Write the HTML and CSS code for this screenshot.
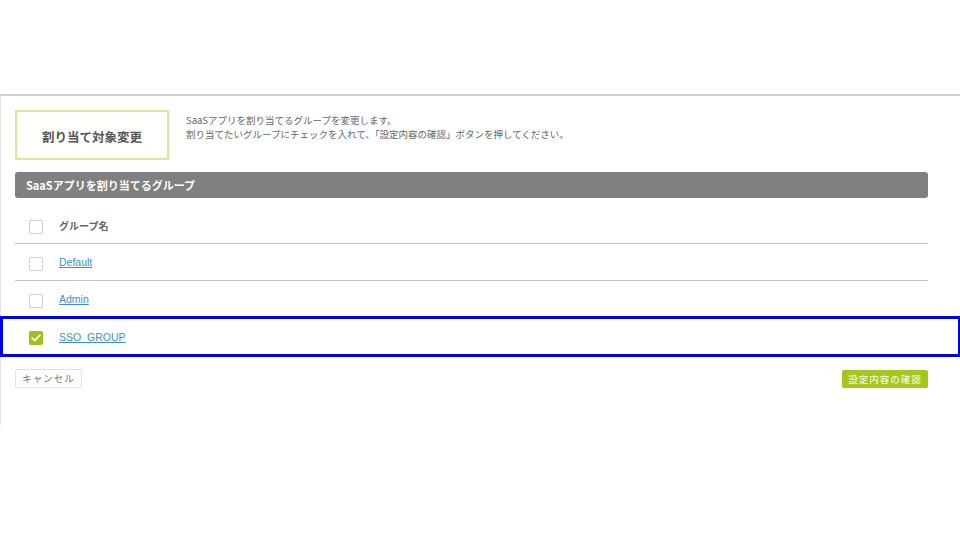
FILE: index.html
```html
<!DOCTYPE html>
<html lang="ja">
<head>
    <meta charset="UTF-8">
    <title>割り当て対象変更</title>
    <link rel="stylesheet" href="styles.css">
</head>
<body>
<div class="page">
    <div class="intro">
        <div class="title-box">割り当て対象変更</div>
        <div class="desc">
            <p>SaaSアプリを割り当てるグループを変更します。</p>
            <p>割り当てたいグループにチェックを入れて、「設定内容の確認」ボタンを押してください。</p>
        </div>
    </div>

    <div class="section-bar">SaaSアプリを割り当てるグループ</div>

    <div class="list">
        <div class="row head">
            <span class="check"></span>
            <span class="name">グループ名</span>
        </div>
        <div class="row">
            <span class="check"></span>
            <a class="link" href="javascript:">Default</a>
        </div>
        <div class="row">
            <span class="check"></span>
            <a class="link" href="javascript:">Admin</a>
        </div>
        <div class="row last">
            <span class="check on">
                <svg width="10" height="8" viewBox="0 0 10 8"><path d="M1.2 4.2 L3.8 6.6 L8.8 1.4" fill="none" stroke="#fff" stroke-width="1.8" stroke-linecap="round" stroke-linejoin="round"/></svg>
            </span>
            <a class="link" href="javascript:">SSO_GROUP</a>
            <div class="highlight"></div>
        </div>
    </div>

    <div class="actions">
        <a class="btn-cancel" href="javascript:">キャンセル</a>
        <a class="btn-confirm" href="javascript:">設定内容の確認</a>
    </div>
</div>
</body>
</html>
```

FILE: styles.css
```css
*{
    margin: 0;
    padding: 0;
    box-sizing: border-box;
}
body{
    font-family: "Noto Sans CJK JP", "Noto Sans", sans-serif;
    color: #555;
    background: #fff;
}
.page{
    margin-top: 94px;
    height: 331px;
    border-top: 2px solid #cfcfcf;
    border-left: 1px solid #e6e6e6;
    padding: 14px 32px 0 14px;
}
.intro{
    display: flex;
    align-items: flex-start;
}
.title-box{
    width: 154px;
    height: 50px;
    border: 2px solid #d6e89a;
    display: flex;
    align-items: center;
    justify-content: center;
    padding-top: 2px;
    font-size: 12.5px;
    font-weight: bold;
    color: #555;
}
.desc{
    margin-left: 17px;
    padding-top: 3px;
    font-size: 9.5px;
    line-height: 14px;
    color: #666;
}
.section-bar{
    margin-top: 12px;
    height: 26px;
    background-color: #808080;
    border-radius: 3px;
    color: #fff;
    font-size: 11px;
    font-weight: bold;
    line-height: 26px;
    padding-left: 11px;
}
.list{
    margin-top: 9px;
}
.row{
    position: relative;
    height: 37px;
    display: flex;
    align-items: center;
    padding-left: 14px;
    border-bottom: 1px solid #c4c4c4;
}
.row.last{
    border-bottom: none;
}
.check{
    width: 14px;
    height: 14px;
    border: 1px solid #cfcfcf;
    border-radius: 2px;
    margin-top: 3px;
    display: flex;
    align-items: center;
    justify-content: center;
}
.check.on{
    border: none;
    background-color: #9fc21a;
}
.name{
    margin-left: 16px;
    font-size: 10px;
    font-weight: bold;
    color: #666;
}
.link{
    margin-left: 16px;
    font-family: "Liberation Sans", Arial, sans-serif;
    font-size: 10.5px;
    color: #3b8fd3;
    text-decoration: underline;
}
.highlight{
    position: absolute;
    left: -15px;
    right: -32px;
    top: -2px;
    bottom: -2px;
    border: 3px solid #0000f0;
    border-right-width: 2px;
    pointer-events: none;
}
.actions{
    margin-top: 14px;
    display: flex;
    justify-content: space-between;
    align-items: center;
}
.btn-cancel{
    display: block;
    height: 19px;
    width: 67px;
    border: 1px solid #e2e2e2;
    border-radius: 2px;
    font-size: 9.5px;
    line-height: 17px;
    text-align: center;
    letter-spacing: 1px;
    color: #777;
    text-decoration: none;
}
.btn-confirm{
    display: block;
    height: 18px;
    width: 86px;
    background-color: #a4c71c;
    border-radius: 2px;
    font-size: 9.5px;
    line-height: 18px;
    text-align: center;
    letter-spacing: 1px;
    color: #fff;
    text-decoration: none;
}
```
